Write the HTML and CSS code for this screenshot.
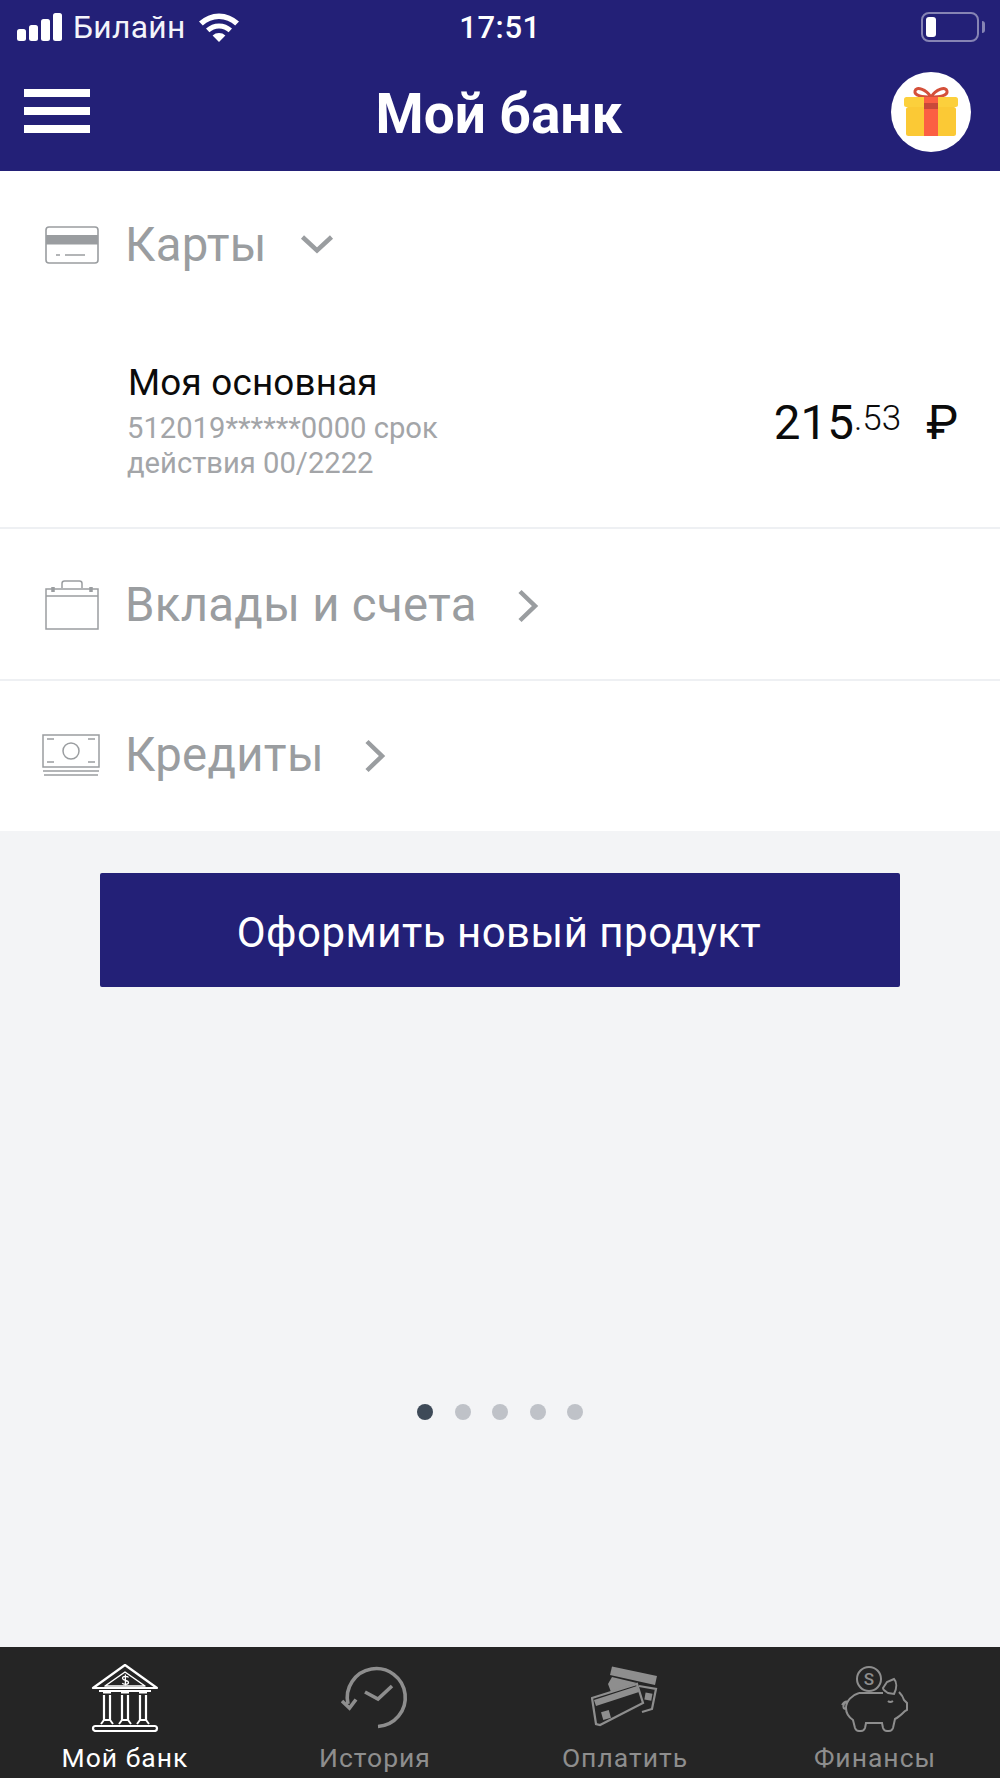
FILE: index.html
```html
<!DOCTYPE html>
<html lang="ru">
<head>
<meta charset="utf-8">
<title>Мой банк</title>
<link rel="stylesheet" href="styles.css">
</head>
<body>
<div class="screen">
  <header class="header">
    <div class="status">
      <div class="status-left">
        <svg class="signal" viewBox="0 0 45 28" width="45" height="28"><rect x="0" y="16" width="9" height="12" rx="2.5"/><rect x="12" y="12" width="9" height="16" rx="2.5"/><rect x="24" y="6" width="9" height="22" rx="2.5"/><rect x="36" y="0" width="9" height="28" rx="2.5"/></svg>
        <span class="carrier">Билайн</span>
        <svg class="wifi" viewBox="0 0 40 29" width="40" height="29"><path d="M20 29 13.6 22.4a9.5 9.5 0 0 1 12.8 0Z"/><path d="M10.4 19.2 7 15.6a19 19 0 0 1 26 0l-3.4 3.6a14 14 0 0 0-19.2 0Z"/><path d="M3.8 12.4 0 8.6a29 29 0 0 1 40 0l-3.8 3.8a24 24 0 0 0-32.4 0Z"/></svg>
      </div>
      <span class="time">17:51</span>
      <div class="battery"><span class="battery-level"></span><span class="battery-nub"></span></div>
    </div>
    <div class="nav">
      <div class="burger"><span></span><span></span><span></span></div>
      <h1 class="title">Мой банк</h1>
      <div class="gift">
        <svg viewBox="0 0 54 50" width="54" height="50">
          <path d="M27 11C22 3 12 0 11 5c-1 5 8 6 16 6Zm0 0c5-8 15-11 16-6 1 5-8 6-16 6Z" fill="none" stroke="#d4503a" stroke-width="3"/>
          <rect x="2" y="21" width="50" height="29" rx="2.5" fill="#fbc935"/>
          <rect x="0" y="11" width="54" height="10" rx="2.5" fill="#fcd03c"/>
          <rect x="20" y="11" width="14" height="39" fill="#fb5f43"/>
          <rect x="20" y="17" width="14" height="6" fill="#c9493a"/>
        </svg>
      </div>
    </div>
  </header>

  <section class="panel">
    <div class="group group-cards">
      <div class="group-head">
        <svg class="group-icon" viewBox="0 0 54 38" width="54" height="38"><rect x="1" y="1" width="52" height="36" rx="3" fill="none" stroke="#9a9da0" stroke-width="1.6"/><rect x="1" y="9" width="52" height="9.5" fill="#9a9da0"/><path d="M11 29h4M20 29h20" stroke="#9a9da0" stroke-width="1.5" fill="none"/></svg>
        <span class="group-name">Карты</span>
        <svg class="chev-down" viewBox="0 0 34 20" width="34" height="20"><path d="M2.5 3 17 16.500 31.500 3" fill="none" stroke="#9a9da0" stroke-width="4.500"/></svg>
      </div>
      <div class="card-row">
        <div class="card-info">
          <div class="card-name">Моя основная</div>
          <div class="card-sub">512019******0000 срок<br>действия 00/2222</div>
        </div>
        <div class="amount"><span class="whole">215</span><span class="cents">.53</span><span class="currency">₽</span></div>
      </div>
    </div>
    <div class="group group-deposits">
      <div class="group-head">
        <svg class="group-icon" viewBox="0 0 54 50" width="54" height="50"><g fill="none" stroke="#9a9da0" stroke-width="1.500"><rect x="1" y="9" width="52" height="40"/><path d="M1 16h52M17 8V3.500Q17 1 19.500 1h15Q37 1 37 3.500V8"/><path d="M8 7v5M46 7v5" stroke-width="3.500"/></g></svg>
        <span class="group-name">Вклады и счета</span>
        <svg class="chev-right" viewBox="0 0 22 34" width="22" height="34"><path d="M3 2.500 18 17 3 31.500" fill="none" stroke="#9a9da0" stroke-width="4.500"/></svg>
      </div>
    </div>
    <div class="group group-credits">
      <div class="group-head">
        <svg class="group-icon money" viewBox="0 0 58 44" width="58" height="44"><g fill="none" stroke="#9a9da0" stroke-width="1.500"><rect x="1" y="1" width="56" height="32"/><circle cx="29" cy="17" r="8"/><path d="M5 5h7M46 5h7M5 28h7M46 28h7M1 37h56M2 41h54"/></g></svg>
        <span class="group-name">Кредиты</span>
        <svg class="chev-right" viewBox="0 0 22 34" width="22" height="34"><path d="M3 2.500 18 17 3 31.500" fill="none" stroke="#9a9da0" stroke-width="4.500"/></svg>
      </div>
    </div>
  </section>

  <main class="content">
    <button class="cta">Оформить новый продукт</button>
    <div class="dots"><span class="dot active"></span><span class="dot"></span><span class="dot"></span><span class="dot"></span><span class="dot"></span></div>
  </main>

  <nav class="tabbar">
    <div class="tab active">
      <svg viewBox="0 0 68 68" width="68" height="68"><g fill="none" stroke="#fff" stroke-width="2.200" stroke-linejoin="round"><path d="M34 1 2 24h64Z"/><path d="M34 8 14 22h40Z" stroke-width="1.500"/><path d="M8 27h52"/><path d="M12 28h8M30 28h8M48 28h8" stroke-width="3"/><path d="M13 31v26M19 31v26M31 31v26M37 31v26M49 31v26M55 31v26"/><path d="M10 60l3-4h6l3 4M28 60l3-4h6l3 4M46 60l3-4h6l3 4" stroke-width="2"/><rect x="2" y="62" width="64" height="5" rx="2.500"/></g><path d="M37.500 13.500c-1-1.500-6-1.500-6 .8 0 2.700 6 1.400 6 4.200 0 2.300-5 2.300-6.200.6M34.400 10.500v11" fill="none" stroke="#fff" stroke-width="1.300"/></svg>
      <span class="tab-label">Мой банк</span>
    </div>
    <div class="tab">
      <svg viewBox="0 0 68 68" width="68" height="68"><g fill="none" stroke="#8e8e8e" stroke-width="3.600"><path d="M7 40A29 29 0 1 1 37 62.500"/><path d="M1 37l7.500 7 6.500-8.500" /><path d="M24 28l13 7 14-13"/></g></svg>
      <span class="tab-label">История</span>
    </div>
    <div class="tab">
      <svg viewBox="0 0 68 68" width="68" height="68"><g fill="#8e8e8e"><path d="M21 2.500 66 12l-2 9-45-10Z"/><path d="M17 20l4-7 25 6-26 9Z"/></g><g fill="none" stroke="#8e8e8e" stroke-width="2.200"><path d="M48 22l17 3-4 20-10 3"/><path d="M1 34 46 20l6 19L9 61 5 60Z"/></g><path d="M3 36 46 22l2 6L5 42Z" fill="#8e8e8e"/><rect x="11" y="47" width="8" height="8" fill="#8e8e8e" transform="rotate(-16 15 51)"/><rect x="54" y="29" width="7" height="7" fill="#8e8e8e" transform="rotate(10 57 32)"/></svg>
      <span class="tab-label">Оплатить</span>
    </div>
    <div class="tab">
      <svg viewBox="0 0 68 68" width="68" height="68"><g fill="none" stroke="#8e8e8e" stroke-width="2"><circle cx="28" cy="15" r="12"/><path d="M18 29c-7 2-13 8-13 15 0 6 4 10 7 12l2 8q1 3 4 3h2q3 0 4-3l1-5h16l1 5q1 3 4 3h2q3 0 4-3l2-9c4-2 8-6 10-8l2-1v-7l-3-3c-1-4-3-6-5-8"/><path d="M42 24l4-6 7-3c3 3 3 9 0 15l-6-1c-3-2-5-3-5-5Z"/><path d="M5 38c-4 3-3 7 0 7M1 41c2-3 4-4 6-3M47 37q2 2 5 0"/><path d="M18 29h24"/></g><text class="coin" x="28" y="21" text-anchor="middle">S</text></svg>
      <span class="tab-label">Финансы</span>
    </div>
  </nav>
</div>
</body>
</html>
```

FILE: styles.css
```css
* { box-sizing: border-box; }
html, body { margin: 0; padding: 0; }
body { font-family: Roboto, "Noto Sans", sans-serif; background: #f3f4f6; }
.screen { width: 1000px; height: 1778px; display: flex; flex-direction: column; overflow: hidden; }

.header { background: #232077; color: #fff; height: 171px; flex: none; }
.status { height: 54px; padding: 12px 21px 0 17px; display: flex; align-items: flex-start; position: relative; }
.status-left { display: flex; align-items: center; height: 30px; }
.signal { fill: #fff; display: block; }
.wifi { fill: #fff; display: block; margin-left: 13px; }
.carrier { margin-left: 11px; font-size: 31.8px; line-height: 30px; letter-spacing: .3px; color: #f4f4fa; }
.time { position: absolute; left: 0; right: 0; top: 13px; text-align: center; font-size: 31px; line-height: 30px; font-weight: 500; letter-spacing: .6px; }
.battery { margin-left: auto; width: 58px; height: 30px; border: 2px solid rgba(255,255,255,.45); border-radius: 8px; position: relative; }
.battery-level { position: absolute; left: 3px; top: 3px; width: 10px; height: 20px; background: #fff; border-radius: 3px; }
.battery-nub { position: absolute; right: -8px; top: 7px; width: 3px; height: 12px; background: rgba(255,255,255,.45); border-radius: 0 3px 3px 0; }

.nav { height: 117px; padding: 0 29px 0 24px; display: flex; align-items: center; justify-content: space-between; position: relative; }
.burger { width: 66px; display: flex; flex-direction: column; gap: 10px; margin-top: -3px; }
.burger span { height: 8px; background: #fff; }
.title { position: absolute; left: -2px; right: 0; top: 31px; margin: 0; text-align: center; font-size: 55px; line-height: 58px; font-weight: 700; }
.gift { width: 80px; height: 80px; border-radius: 50%; background: #fff; display: flex; align-items: center; justify-content: center; margin-top: -1px; }
.gift svg { display: block; margin-top: -3px; }

.panel { background: #fff; flex: none; height: 660px; display: flex; flex-direction: column; }
.group { border-bottom: 2px solid #eef0f3; }
.group:last-child { border-bottom: 0; flex: 1; }
.group-cards { height: 358px; }
.group-deposits { height: 152px; }
.group-head { display: flex; align-items: center; padding-left: 45px; color: #9a9da0; }
.group-cards .group-head { height: 147px; }
.group-deposits .group-head { height: 152px; }
.group-credits .group-head { height: 148px; }
.group-icon { flex: none; display: block; }
.group-credits .group-icon { margin-top: 2px; }
.money { margin-left: -3px; margin-right: -1px; }
.group-name { margin-left: 26px; font-size: 47.3px; line-height: 56px; letter-spacing: .3px; }
.chev-down { margin-left: 33px; margin-top: -2px; }
.chev-right { margin-left: 40px; margin-top: 2px; }

.card-row { display: flex; justify-content: space-between; align-items: center; padding: 40px 42px 0 126px; }
.card-info { padding-top: 3px; }
.card-name { font-size: 36.8px; line-height: 44px; color: #0b0b0b; padding-left: 2px; letter-spacing: .2px; }
.card-sub { font-size: 29.2px; line-height: 35px; color: #a3a5a8; margin-top: 6px; padding-left: 1px; }
.amount { display: flex; align-items: baseline; color: #0b0b0b; margin-top: 6px; }
.whole { font-size: 47.5px; }
.cents { font-size: 35px; font-weight: 300; position: relative; top: -9px; }
.currency { font-size: 48px; margin-left: 25px; }

.content { flex: 1; display: flex; flex-direction: column; align-items: center; padding-top: 42px; }
.cta { width: 800px; height: 114px; background: #232077; color: #fff; border: 0; border-radius: 2px; padding: 4px 2px 0 0; font-family: inherit; font-size: 42px; letter-spacing: .5px; }
.dots { display: flex; gap: 21.500px; margin-top: 417px; }
.dot { width: 16px; height: 16px; border-radius: 50%; background: #bfc2c8; }
.dot.active { background: #3e4a58; }

.tabbar { background: #252525; height: 131px; flex: none; display: grid; grid-template-columns: repeat(4, 250px); }
.tab { display: flex; flex-direction: column; align-items: center; padding-top: 17px; color: #8e8e8e; }
.tab svg { display: block; }
.tab.active { color: #fff; }
.tab-label { font-size: 26.5px; line-height: 32px; margin-top: 10px; letter-spacing: 1px; white-space: nowrap; }
.coin { font-family: Roboto, sans-serif; font-size: 17px; font-weight: 500; fill: #8e8e8e; stroke: none; }
```
